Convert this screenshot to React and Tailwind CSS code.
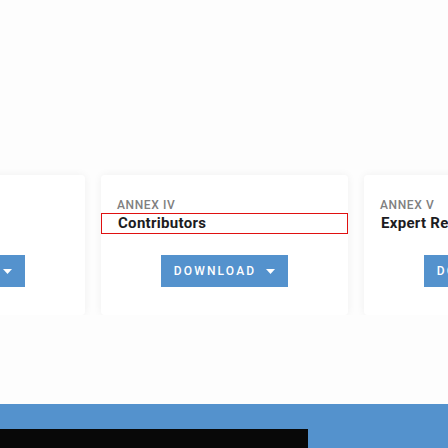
import React from "react";

const annexes = [
  { id: 3, label: "ANNEX III", title: "Glossary" },
  { id: 4, label: "ANNEX IV", title: "Contributors", active: true },
  { id: 5, label: "ANNEX V", title: "Expert Reviewers" },
];

const Caret = () => (
  <svg width="9" height="5" viewBox="0 0 9 5" className="ml-[10px]">
    <path d="M0 0h9L4.5 5z" fill="currentColor" />
  </svg>
);

export default function App() {
  return (
    <div className="w-[448px] h-[448px] bg-[#fdfdfd] overflow-hidden flex flex-col" style={{ fontFamily: "Roboto, 'Liberation Sans', sans-serif" }}>
      {/* Carousel */}
      <div className="pt-[175px] overflow-hidden">
        <div className="flex gap-4 ml-[-162px]">
          {annexes.map((a) => (
            <div
              key={a.id}
              className="w-[247px] shrink-0 bg-white rounded-[4px] shadow-[0_0_8px_rgba(0,0,0,0.06)] pt-[22px] pb-[28px]"
            >
              <div className="px-4 text-[12px] leading-[16px] font-medium tracking-[0.05em] text-[#808080]">
                {a.label}
              </div>
              <h3
                className={
                  a.active
                    ? "px-4 h-[21px] text-[15px] leading-[19px] font-bold tracking-[0.02em] text-[#1c1c22] border border-[#e01010] whitespace-nowrap overflow-hidden"
                    : "px-4 h-[21px] text-[15px] leading-[19px] font-bold tracking-[0.02em] text-[#1c1c22] border border-transparent whitespace-nowrap overflow-hidden"
                }
              >
                {a.title}
              </h3>
              <div className="flex justify-center mt-[21px]">
                <button className="w-[127px] h-[32px] bg-[#5492cd] text-white text-[12px] font-medium tracking-[0.18em] flex items-center justify-center">
                  DOWNLOAD
                  <Caret />
                </button>
              </div>
            </div>
          ))}
        </div>
      </div>

      {/* Footer */}
      <div className="mt-auto h-[44px] bg-[#5492cd] flex flex-col justify-end">
        <div className="w-[308px] h-[19px] bg-[#080808]" />
      </div>
    </div>
  );
}
